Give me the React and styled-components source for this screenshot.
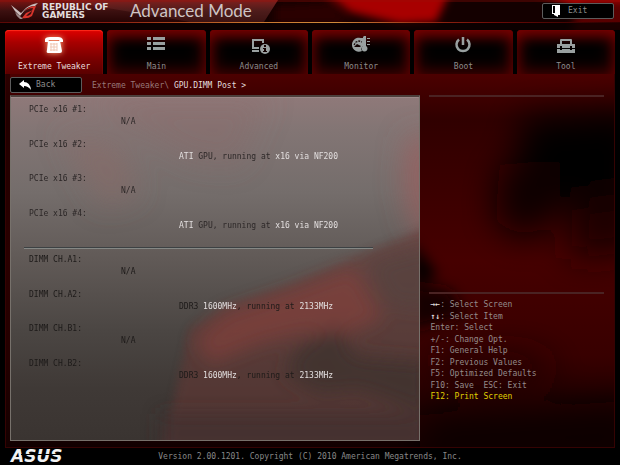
import React from "react";
import styled, { createGlobalStyle, css } from "styled-components";

const GlobalStyle = createGlobalStyle`
  *, *::before, *::after { box-sizing: border-box; }
  html, body, #root { height: 100%; }
  body { margin: 0; background: #000; }
`;

const mono = css`
  font-family: "DejaVu Sans Mono", "Liberation Mono", monospace;
  font-size: 8px;
  line-height: 12px;
`;

const Page = styled.div`
  ${mono}
  position: relative;
  isolation: isolate;
  display: flex;
  flex-direction: column;
  min-height: 100vh;
  color: #8f8b8b;
  background: #000;
`;

const Backdrop = styled.svg`
  position: absolute;
  inset: 0;
  z-index: -1;
  width: 100%;
  height: 100%;
`;

const Header = styled.header`
  position: relative;
  isolation: isolate;
  display: flex;
  align-items: center;
  height: 23px;
  padding: 0 6px 0 11px;
  border-bottom: 1px solid;
  border-image: linear-gradient(90deg, #5a0806, #8a1c10 18%, #c9742c 40%, #d08a3a 54%, #9a2b14 68%, #6a0a06 80%, #2a0000) 1;
`;

const RogMark = styled.svg`
  width: 28px;
  height: 18px;
  margin-right: 3px;
`;

const Brand = styled.div`
  width: 85px;
  font: 700 9px/8px "DejaVu Sans", sans-serif;
  color: #e2dcdc;
  white-space: pre-line;
`;

const Title = styled.h1`
  flex: 1;
  margin: 0 0 0 3px;
  font: 400 17px/20px Lato, sans-serif;
  color: #cfc4c4;
  white-space: nowrap;
`;

const FrameButton = styled.button`
  ${mono}
  display: flex;
  align-items: center;
  gap: ${(p) => p.$gap}px;
  width: 72px;
  height: 16px;
  padding: 0 0 0 8px;
  border: 1px solid #5c5c5c;
  border-radius: 2px;
  background: #000;
  color: #8d8d8d;
`;

const ButtonIcon = styled.svg`
  flex: none;
  width: 12px;
  height: 12px;
`;

const Tabs = styled.nav`
  display: grid;
  grid-template-columns: repeat(6, 1fr);
  gap: 4px;
  padding: 7px 5px 0;
`;

const Tab = styled.button`
  ${mono}
  display: flex;
  flex-direction: column;
  align-items: center;
  gap: 6px;
  height: 44px;
  padding: 5px 0 0;
  border: 0;
  border-radius: 4px 4px 0 0;
  background: #020000;
  color: #8c8c8c;
  box-shadow: inset 0 1px 0 #6c0000, inset 0 9px 14px -4px #7a0000, inset 0 0 16px 3px #4c0000;
  ${(p) =>
    p.$active &&
    css`
      color: #e8dcdc;
      background: linear-gradient(#e00000, #a80000 28%, #7a0000 65%, #5a0000);
      box-shadow: inset 0 1px 1px #ff2a1a;
    `}
`;

const TabIcon = styled.svg`
  width: 22px;
  height: 20px;
  color: #99a0a0;
  fill: currentColor;
  ${(p) =>
    p.$active &&
    css`
      color: #fff;
      filter: drop-shadow(0 0 3px #ffb080);
    `}
`;

const Frame = styled.main`
  flex: 1;
  display: flex;
  flex-direction: column;
  margin: 0 5px;
  padding: 3px 10px 6px 4px;
  border: 1px solid #350303;
  border-top: 0;
`;

const PathBar = styled.div`
  display: flex;
  align-items: center;
  gap: 10px;
  height: 18px;
  padding-bottom: 2px;
`;

const Crumbs = styled.div`
  padding-top: 2px;
  color: #967878;
  white-space: pre;
`;

const Bright = styled.span`
  color: #e2dede;
`;

const Columns = styled.div`
  flex: 1;
  display: grid;
  grid-template-columns: 7fr 3fr;
  gap: 9px;
`;

const Board = styled.section`
  position: relative;
  isolation: isolate;
  padding: 7px 0 0;
  border: 1px solid #77716b;
  border-top: 2px solid #4c403c;
  background: linear-gradient(#8f7979, #827574 10%, #746d6b 28%, #625b58 46%, #4b4643 68%, #3f3936 85%, #3a3431);
  overflow: hidden;
`;

const PostList = styled.dl`
  display: grid;
  grid-auto-rows: 35px 34px;
  margin: 0;
  padding-left: 18px;
  color: ${(p) => p.$ink};
`;

const PostEntry = styled.div`
  dt { margin: 0; }
  dd { margin: 0 0 0 ${(p) => (p.$empty ? 92 : 150)}px; }
`;

const Rule = styled.hr`
  height: 2px;
  margin: 5px 46px 5px 13px;
  border: 0;
  border-top: 1px solid #3c4143;
  border-bottom: 1px solid #858885;
`;

const Aside = styled.aside`
  display: grid;
  grid-template-rows: 198fr 149fr;
`;

const AsideBox = styled.section`
  padding: 5px 2px;
  border-top: 2px solid #4a2323;
`;

const Keys = styled.ul`
  display: grid;
  grid-auto-rows: 12px 11px;
  margin: 0;
  padding: 0;
  list-style: none;
  color: #948b8b;
  white-space: pre;
`;

const Key = styled.li`
  color: ${(p) => (p.$hot ? "#e0d000" : "inherit")};
`;

const Arrows = styled.span`
  font-weight: 700;
  color: #e2dede;
`;

const Footer = styled.footer`
  display: grid;
  grid-template-columns: 1fr auto 1fr;
  align-items: center;
  height: 17px;
  padding: 0 11px;
  color: #888;
`;

const Asus = styled.strong`
  position: relative;
  justify-self: start;
  font: italic 700 17px/15px "DejaVu Sans", sans-serif;
  color: #f2f2f2;
  &::after {
    content: "";
    position: absolute;
    left: 10px;
    right: 0;
    top: 5px;
    height: 1px;
    background: #000;
  }
`;

function PageArt() {
  return (
    <Backdrop viewBox="0 0 620 465" preserveAspectRatio="none" aria-hidden="true">
      <defs>
        <filter id="soft" x="-60%" y="-60%" width="220%" height="220%"><feGaussianBlur stdDeviation="17" /></filter>
        <filter id="soft7" x="-60%" y="-60%" width="220%" height="220%"><feGaussianBlur stdDeviation="7" /></filter>
        <filter id="soft4" x="-40%" y="-40%" width="180%" height="180%"><feGaussianBlur stdDeviation="4" /></filter>
        <linearGradient id="base" x2="0" y2="1">
          <stop offset="0" stopColor="#4c0000" />
          <stop offset=".12" stopColor="#300000" />
          <stop offset=".5" stopColor="#460000" />
          <stop offset=".75" stopColor="#380000" />
          <stop offset="1" stopColor="#100000" />
        </linearGradient>
        <linearGradient id="plate" x2="0" y2="1">
          <stop offset="0" stopColor="#7c1412" />
          <stop offset=".5" stopColor="#3c1010" />
          <stop offset="1" stopColor="#260404" />
        </linearGradient>
        <clipPath id="frameClip"><path d="M5 74H615V448H5Z" /></clipPath>
        <clipPath id="headClip"><path d="M0 0H620V30H0Z" /></clipPath>
      </defs>
      <g clipPath="url(#headClip)">
        <path d="M0 0H620V30H0Z" fill="#140000" />
        <g filter="url(#soft4)">
          <path d="M325 -8H450L436 22L400 24L350 12Z" fill="#a80000" />
          <path d="M535 -8H630V14L580 8Z" fill="#b80000" />
          <path d="M580 0H630V34H570Z" fill="#580000" />
          <path d="M275 6L330 2L350 24H275Z" fill="#2a0000" />
        </g>
        <path d="M0 0H278L264 22H0Z" fill="url(#plate)" />
        <path d="M60 0H278L264 22H190Z" fill="#8c4a44" opacity=".22" />
        <path d="M0 1H620" stroke="#a01008" opacity=".6" />
        <path d="M0 23H620V30H0Z" fill="#080000" opacity=".75" />
      </g>
      <g clipPath="url(#frameClip)">
        <path d="M5 74H615V448H5Z" fill="url(#base)" />
        <g filter="url(#soft)">
          <path d="M520 118L640 110V255L580 215L550 195L520 175Z" fill="#050000" />
          <path d="M500 165L560 160L560 215L525 240L495 220Z" fill="#100000" />
          <path d="M575 200L640 190V250L570 260Z" fill="#1a0000" />
          <path d="M420 355L530 355L560 370L480 385Z" fill="#200000" />
          <path d="M420 415L640 400V470H420Z" fill="#0c0000" />
        </g>
        <g filter="url(#soft7)">
          <path d="M410 240L434 270L436 278L415 285Z" fill="#000" />
          <path d="M410 285L450 290L465 315L410 330Z" fill="#120000" />
        </g>
        <path d="M5 74H10V448H5Z" fill="#180000" opacity=".6" />
      </g>
      <path d="M0 448H620V465H0Z" fill="#000" />
    </Backdrop>
  );
}

function BoardArt() {
  return (
    <Backdrop viewBox="0 0 410 347" preserveAspectRatio="none" aria-hidden="true">
      <defs>
        <filter id="haze" x="-40%" y="-40%" width="180%" height="180%"><feGaussianBlur stdDeviation="14" /></filter>
        <filter id="edge" x="-20%" y="-20%" width="140%" height="140%"><feGaussianBlur stdDeviation="5" /></filter>
        <filter id="fold" x="-30%" y="-30%" width="160%" height="160%"><feGaussianBlur stdDeviation="9" /></filter>
      </defs>
      <g filter="url(#haze)">
        <path d="M50 35L110 50L130 100L90 110Z" fill="#8f6866" opacity=".45" />
        <path d="M70 0H260L230 70L180 65Z" fill="#8a6866" opacity=".3" />
        <path d="M400 40H430V165L405 130L395 90Z" fill="#a05c5b" opacity=".7" />
      </g>
      <path d="M152 360L180 235L215 212L280 190L340 165L425 130V360Z" fill="#643836" opacity=".6" filter="url(#edge)" />
      <g filter="url(#fold)">
        <path d="M185 245L215 218L280 196L345 172L375 225L335 240L300 238L250 250L200 270Z" fill="#8c3f3c" opacity=".55" />
        <path d="M290 252L330 232L345 262L420 268V320L350 296L310 300L275 280Z" fill="#40322e" opacity=".85" />
        <path d="M360 168L425 150V215L380 210Z" fill="#54433f" opacity=".65" />
        <path d="M150 320H420V360H150Z" fill="#40302d" opacity=".7" />
      </g>
      <path d="M0 0H410" stroke="#cbb" opacity=".5" />
    </Backdrop>
  );
}

function Glyph({ name }) {
  switch (name) {
    case "tweaker":
      return (
        <>
          <path d="M2 4Q3 2 7 2H15Q19 2 20 5V7H17L16 5H6L5 7H2Z" />
          <path d="M5 6H17L19 16Q19 18 17 18H5Q3 18 4 15Z" />
          <path d="M7 9H14M7 12H14M7 15H14M8 8V16M11 8V16M14 8V16" fill="none" stroke="#f0c8b4" strokeWidth="1" />
        </>
      );
    case "main":
      return <path d="M2 2H6V5H2ZM8 2H20V5H8ZM2 7H6V10H2ZM8 7H20V10H8ZM2 12H6V15H2ZM8 12H20V15H8Z" />;
    case "advanced":
      return (
        <>
          <path d="M4 4H16V8H14V6H6V12H11V14H4ZM4 15H11V17H4Z" />
          <circle cx="17" cy="14" r="5" />
          <path d="M16 10H18V12H16ZM15 13H18V16H19V17H15V16H16V14H15Z" fill="#100" />
        </>
      );
    case "monitor":
      return (
        <>
          <path d="M11 3A7 7 0 1 0 12 16L11 14Q12 12 13 11V3Z" />
          <path d="M4 10L6 7L9 6L12 7" fill="none" stroke="#100" strokeWidth="1.2" strokeDasharray="2 1" />
          <path d="M7 9L11 11L10 12H4Z" fill="#100" />
          <path d="M14 1H16V11A3 3 0 1 1 13 11V2ZM17 3H20V4H17ZM17 6H20V7H17ZM17 9H20V10H17Z" />
        </>
      );
    case "boot":
      return (
        <path d="M11 2V10M7 4.5A6.5 6.5 0 1 0 15 4.5" fill="none" stroke="currentColor" strokeWidth="2.5" />
      );
    default:
      return (
        <>
          <path d="M5 9V5Q5 4 6 4H16Q17 4 17 5V9H15V6H7V9Z" />
          <path d="M2 9H20V13H17V11H15V13H7V11H5V13H2ZM2 14H5V15H7V14H15V15H17V14H20V18H2Z" />
        </>
      );
  }
}

const tabs = [
  ["tweaker", "Extreme Tweaker"],
  ["main", "Main"],
  ["advanced", "Advanced"],
  ["monitor", "Monitor"],
  ["boot", "Boot"],
  ["tool", "Tool"],
];

const gpu = <><Bright>ATI</Bright> GPU, running at <Bright>x16 via NF200</Bright></>;
const ddr = <>DDR3 <Bright>1600MHz</Bright>, running at <Bright>2133MHz</Bright></>;

const slots = [["PCIe x16 #1:"], ["PCIe x16 #2:", gpu], ["PCIe x16 #3:"], ["PCIe x16 #4:", gpu]];
const dimms = [["DIMM CH.A1:"], ["DIMM CH.A2:", ddr], ["DIMM CH.B1:"], ["DIMM CH.B2:", ddr]];

const keys = [
  "Enter: Select",
  "+/-: Change Opt.",
  "F1: General Help",
  "F2: Previous Values",
  "F5: Optimized Defaults",
  "F10: Save  ESC: Exit",
];

function Post({ items, ink }) {
  return (
    <PostList $ink={ink}>
      {items.map(([label, value]) => (
        <PostEntry key={label} $empty={!value}>
          <dt>{label}</dt>
          <dd>{value || "N/A"}</dd>
        </PostEntry>
      ))}
    </PostList>
  );
}

export default function App() {
  return (
    <Page>
      <GlobalStyle />
      <PageArt />
      <Header>
        <RogMark viewBox="0 0 28 18" aria-hidden="true">
          <path d="M0 3L10 11L15 6Q20 2 27 1L24 4Q17 4 13 9L9 14Q3 9 0 3Z" fill="#c9bcbc" />
          <path d="M4 10L10 15L12 17L9 17Q5 14 4 10Z" fill="#9c8a8a" />
          <path d="M25 4L21 14Q17 17 11 16L15 11L22 8L17 12L15 14Q18 14 20 12L22 6Q16 6 12 11Q17 4 25 4Z" fill="#d8352c" />
        </RogMark>
        <Brand>{"REPUBLIC OF\nGAMERS"}</Brand>
        <Title>Advanced Mode</Title>
        <FrameButton type="button" $gap={5}>
          <ButtonIcon viewBox="0 0 12 12" aria-hidden="true">
            <path d="M1 0H9V10H7V12L3 10V9H1Z" fill="#fff" />
            <path d="M2 1H4V8H2Z" fill="#000" />
          </ButtonIcon>
          Exit
        </FrameButton>
      </Header>
      <Tabs>
        {tabs.map(([icon, label], i) => (
          <Tab key={icon} type="button" $active={i === 0}>
            <TabIcon viewBox="0 0 22 20" $active={i === 0} aria-hidden="true"><Glyph name={icon} /></TabIcon>
            {label}
          </Tab>
        ))}
      </Tabs>
      <Frame>
        <PathBar>
          <FrameButton type="button" $gap={5}>
            <ButtonIcon viewBox="0 0 12 12" aria-hidden="true">
              <path d="M0 5L5 1V3Q11 3 12 11Q9 7 5 7V9Z" fill="#fff" />
            </ButtonIcon>
            Back
          </FrameButton>
          <Crumbs>Extreme Tweaker\ <Bright>GPU.DIMM Post &gt;</Bright></Crumbs>
        </PathBar>
        <Columns>
          <Board>
            <BoardArt />
            <Post items={slots} ink="#2c2727" />
            <Rule />
            <Post items={dimms} ink="#1d1a19" />
          </Board>
          <Aside>
            <AsideBox />
            <AsideBox>
              <Keys>
                <Key><Arrows>→←</Arrows>: Select Screen</Key>
                <Key><Arrows>↑↓</Arrows>: Select Item</Key>
                {keys.map((k) => <Key key={k}>{k}</Key>)}
                <Key $hot>F12: Print Screen</Key>
              </Keys>
            </AsideBox>
          </Aside>
        </Columns>
      </Frame>
      <Footer>
        <Asus>ASUS</Asus>
        <span>Version 2.00.1201. Copyright (C) 2010 American Megatrends, Inc.</span>
      </Footer>
    </Page>
  );
}
